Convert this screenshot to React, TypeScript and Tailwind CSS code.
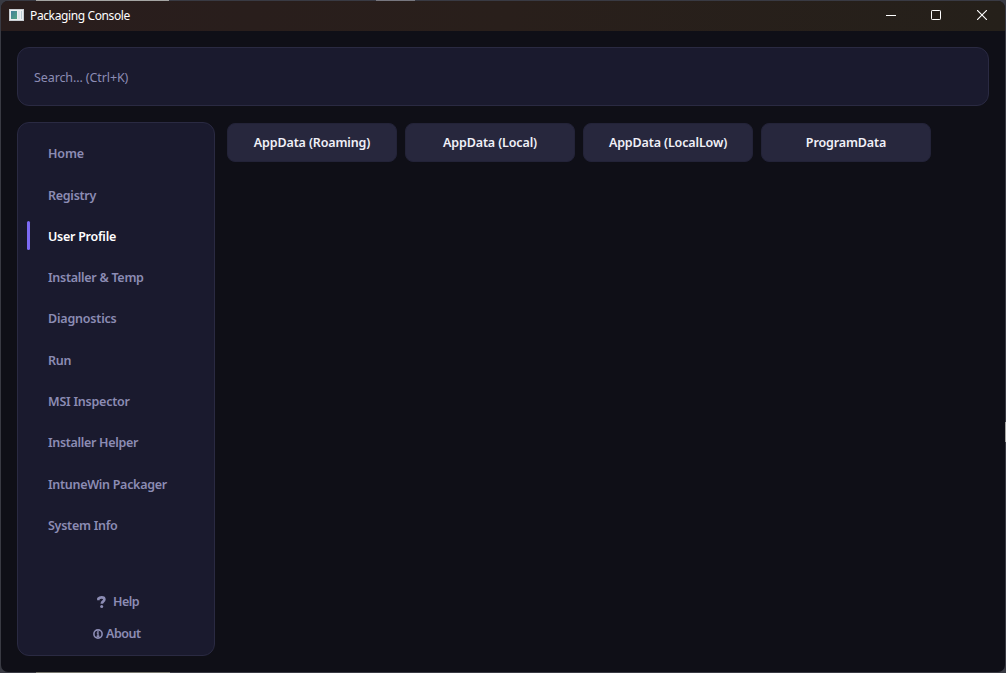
const navItems: { label: string; tracking: string }[] = [
  { label: 'Home', tracking: 'tracking-[-0.1px]' },
  { label: 'Registry', tracking: 'tracking-[-0.27px]' },
  { label: 'User Profile', tracking: 'tracking-[-0.26px]' },
  { label: 'Installer & Temp', tracking: 'tracking-[-0.28px]' },
  { label: 'Diagnostics', tracking: 'tracking-[-0.2px]' },
  { label: 'Run', tracking: 'tracking-[-0.2px]' },
  { label: 'MSI Inspector', tracking: 'tracking-[-0.23px]' },
  { label: 'Installer Helper', tracking: 'tracking-[-0.31px]' },
  { label: 'IntuneWin Packager', tracking: 'tracking-[-0.29px]' },
  { label: 'System Info', tracking: 'tracking-[-0.27px]' },
];

const folders = ['AppData (Roaming)', 'AppData (Local)', 'AppData (LocalLow)', 'ProgramData'];

function AppIcon() {
  return (
    <svg width="15" height="12" viewBox="0 0 15 12" shapeRendering="crispEdges">
      <defs>
        <linearGradient id="pane" x1="0" y1="0" x2="1" y2="1">
          <stop offset="0" stopColor="#437f9c" />
          <stop offset="1" stopColor="#55a482" />
        </linearGradient>
      </defs>
      <rect width="15" height="12" fill="#c9cdd2" />
      <rect x="1" y="1" width="13" height="10" fill="#eceef0" />
      <rect x="2" y="2" width="6" height="8" fill="url(#pane)" />
      <rect x="9" y="2" width="2" height="8" fill="#dde4ea" />
      <rect x="12" y="2" width="1" height="8" fill="#b9c9d2" />
    </svg>
  );
}

function TitleBar() {
  return (
    <header className="flex h-[30px] shrink-0 items-center bg-linear-to-r from-[#291d1d] via-[#291f1b] to-[#25201a] pl-2">
      <span className="-mt-[2px]">
        <AppIcon />
      </span>
      <span className="ml-[6px] flex-1 text-[12px] leading-4 tracking-[-0.38px] text-white">Packaging Console</span>
      <div className="-mt-[2px] flex text-white">
        <span className="grid h-[30px] w-[45px] place-items-center">
          <svg width="10" height="10" viewBox="0 0 10 10" shapeRendering="crispEdges">
            <path d="M0 5.5H10" stroke="currentColor" />
          </svg>
        </span>
        <span className="grid h-[30px] w-[46px] place-items-center">
          <svg width="10" height="10" viewBox="0 0 10 10" fill="none">
            <rect x=".5" y=".5" width="9" height="9" rx=".7" stroke="currentColor" />
          </svg>
        </span>
        <span className="grid h-[30px] w-[46px] place-items-center">
          <svg width="10" height="10" viewBox="0 0 10 10" fill="none">
            <path d="M0 0L10 10M10 0L0 10" stroke="currentColor" strokeWidth="1.1" />
          </svg>
        </span>
      </div>
    </header>
  );
}

function Sidebar() {
  return (
    <aside className="flex w-[198px] shrink-0 flex-col rounded-[12px] border border-[#2a2a42] bg-[#1a1a2e] pt-[10px] pb-[5px] text-[12.5px] font-semibold text-[#8c8cb4]">
      <nav className="flex flex-col">
        {navItems.map(({ label, tracking }) => (
          <div key={label} className="flex h-[41.3px] items-center pl-[9px]">
            <span
              className={`mb-px h-[29px] w-[3px] rounded-full ${label === 'User Profile' ? 'bg-[#7c6af5]' : 'bg-transparent'}`}
            />
            <span className={`ml-[18px] pt-[2px] whitespace-nowrap ${tracking} ${label === 'User Profile' ? 'text-white' : ''}`}>
              {label}
            </span>
          </div>
        ))}
      </nav>
      <div className="mt-auto flex flex-col">
        <div className="flex h-8 items-center pl-[79px]">
          <svg width="9" height="12" viewBox="0 0 9 12" fill="none">
            <path
              d="M1.4 4.2V2.6C2.2 1.7 3.3 1.4 4.6 1.4C6.4 1.4 7.4 2.2 7.4 3.5C7.4 5.5 4.8 5.3 4.8 7.8"
              stroke="currentColor"
              strokeWidth="2.6"
            />
            <circle cx="4.7" cy="10.5" r="1.5" fill="currentColor" />
          </svg>
          <span className="ml-[7px] pt-px tracking-[-0.5px]">Help</span>
        </div>
        <div className="flex h-8 items-center pl-[75px]">
          <svg width="10" height="10" viewBox="0 0 10 10" fill="none">
            <circle cx="5" cy="5" r="4.1" stroke="currentColor" strokeWidth="1.6" />
            <path d="M3.8 4H5V7.3M3.6 7.3H6.4" stroke="currentColor" strokeWidth="1.4" />
            <rect x="4.3" y="2" width="1.4" height="1.3" fill="currentColor" />
          </svg>
          <span className="ml-[3px] pt-px tracking-[-0.5px]">About</span>
        </div>
      </div>
    </aside>
  );
}

export default function App() {
  return (
    <div className="relative h-[673px] w-[1006px] overflow-hidden bg-[#393a43] p-px font-['Noto_Sans','Open_Sans',sans-serif]">
      <span className="absolute top-0 left-[36px] h-px w-[133px] bg-[#a5a5a3]" />
      <span className="absolute top-0 left-[376px] h-px w-[39px] bg-[#77777f]" />
      <span className="absolute bottom-0 left-[36px] h-px w-[134px] bg-[#77776f]" />
      <span className="absolute top-[422px] right-0 h-[20px] w-px bg-[#a5a5a3]" />
      <div className="flex h-full w-full flex-col overflow-hidden rounded-[7px] bg-[#0f0f17]">
        <TitleBar />
        <main className="flex min-h-0 flex-1 flex-col gap-4 p-4">
          <div className="flex h-[59px] shrink-0 items-center rounded-[12px] border border-[#2a2a42] bg-[#1a1a2e] pl-4">
            <span className="pt-[3px] text-[12.5px] tracking-[-0.1px] text-[#8c8cb4]">Search... (Ctrl+K)</span>
          </div>
          <div className="flex min-h-0 flex-1 gap-3">
            <Sidebar />
            <div className="flex items-start gap-2 pt-[0.5px]">
              {folders.map((name) => (
                <button
                  key={name}
                  className="h-[39px] w-[170px] rounded-[8px] border border-[#232338] bg-[#27273d] pt-[2px] text-[12.5px] font-semibold tracking-[-0.13px] whitespace-nowrap text-[#f0f0f8]"
                >
                  {name}
                </button>
              ))}
            </div>
          </div>
        </main>
      </div>
    </div>
  );
}
